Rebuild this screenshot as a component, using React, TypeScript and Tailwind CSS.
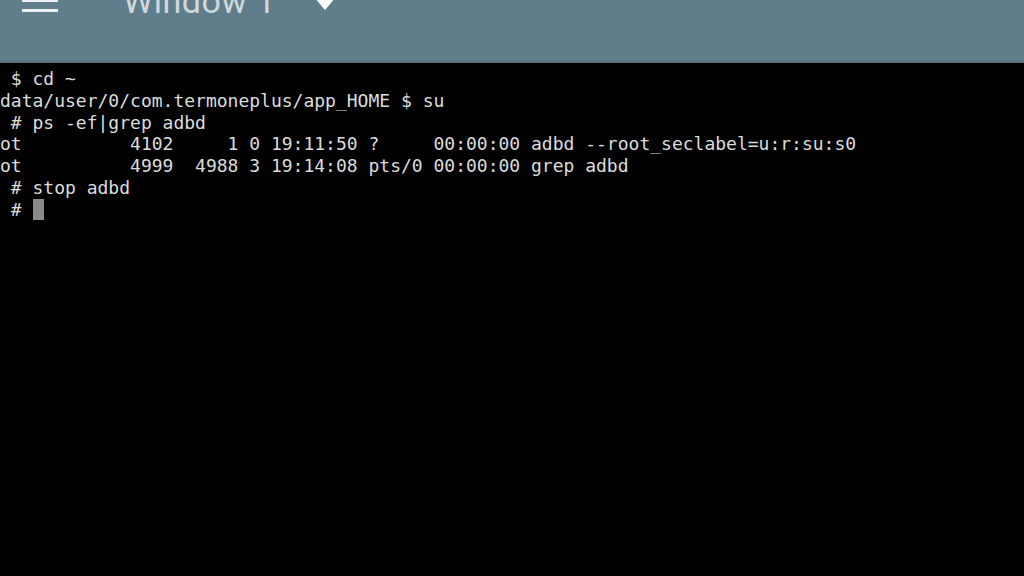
const lines = [
  ' $ cd ~',
  'data/user/0/com.termoneplus/app_HOME $ su',
  ' # ps -ef|grep adbd',
  'ot          4102     1 0 19:11:50 ?     00:00:00 adbd --root_seclabel=u:r:su:s0',
  'ot          4999  4988 3 19:14:08 pts/0 00:00:00 grep adbd',
  ' # stop adbd',
];

export default function App() {
  return (
    <div className="w-[1024px] h-[576px] bg-black overflow-hidden flex flex-col">
      {/* Toolbar */}
      <header className="h-[63px] shrink-0 bg-[#607d8b] border-b-2 border-[#546e7a] overflow-hidden flex items-start">
        <div className="ml-[22px] -mt-[1px] flex flex-col gap-[7px]">
          <span className="block w-[36px] h-[3px] bg-[#eceff1]" />
          <span className="block w-[36px] h-[3px] bg-[#eceff1]" />
        </div>
        <span
          className="ml-[65px] -mt-[19px] text-[34px] leading-[40px] text-[#cfd8dc] tracking-[0.5px]"
          style={{ fontFamily: 'Roboto, "Noto Sans", sans-serif' }}
        >
          Window 1
        </span>
        <svg className="ml-[38px] -mt-[3px]" width="22" height="13" viewBox="0 0 22 13">
          <path d="M0 0 L22 0 L11 13 Z" fill="#ffffff" />
        </svg>
      </header>

      {/* Terminal */}
      <pre
        className="pt-[5px] text-[18px] leading-[21.8px] text-[#dcdcdc] whitespace-pre"
        style={{ fontFamily: '"DejaVu Sans Mono", "Liberation Mono", monospace' }}
      >
        {lines.map((l, i) => (
          <div key={i}>{l}</div>
        ))}
        <div className="flex items-center">
          <span>{' # '}</span>
          <span className="inline-block w-[11px] h-[21px] bg-[#8a8a8a]" />
        </div>
      </pre>
    </div>
  );
}
